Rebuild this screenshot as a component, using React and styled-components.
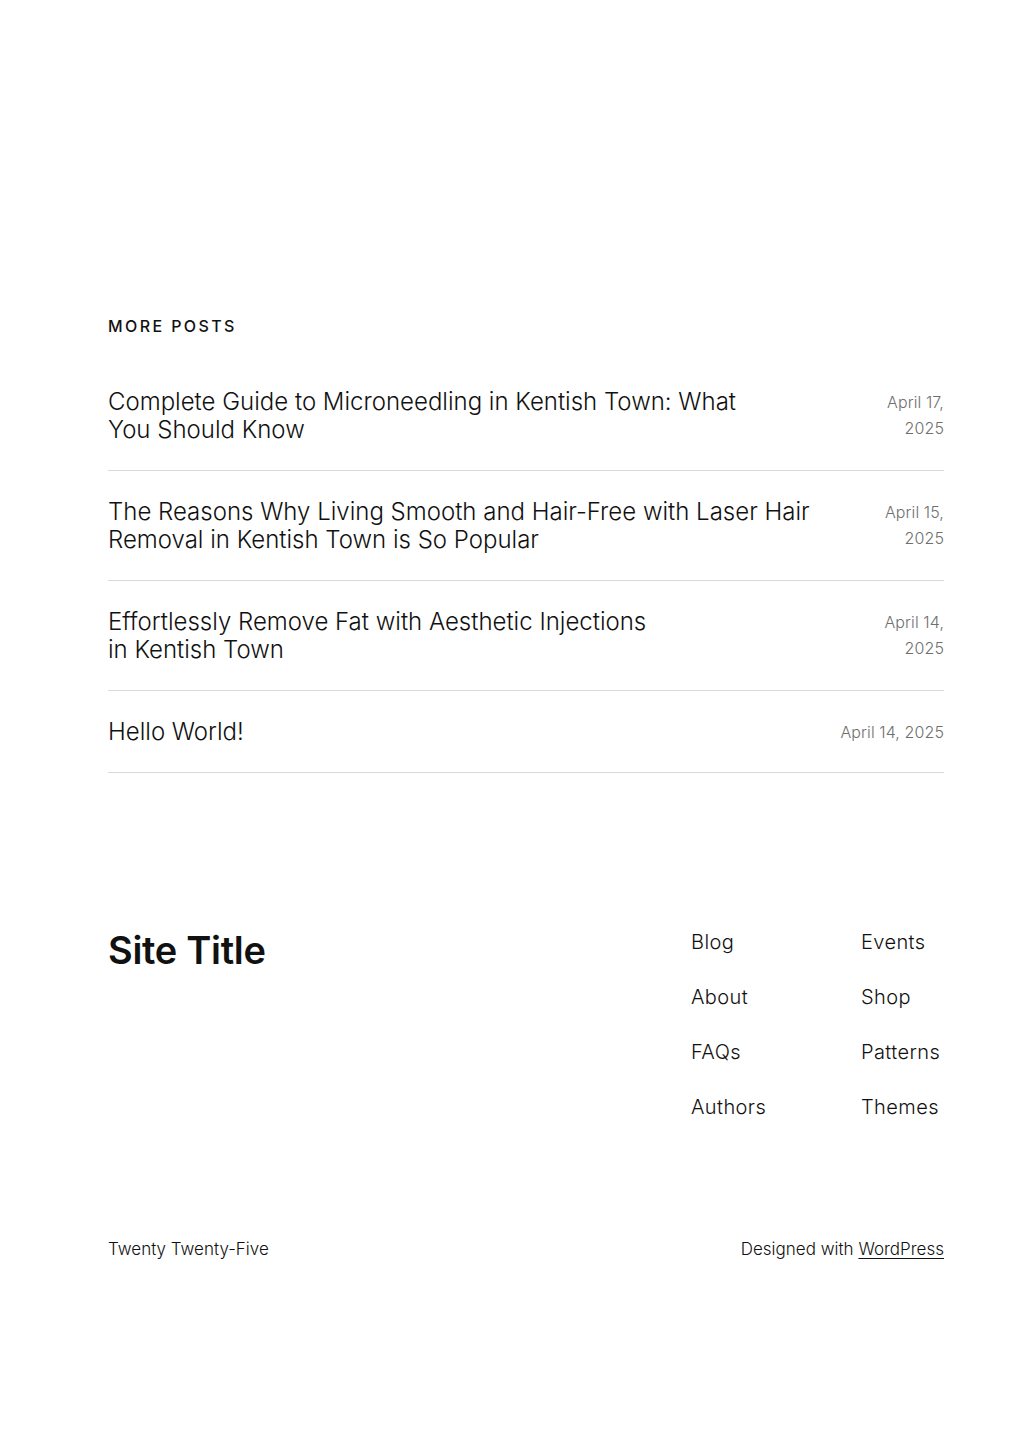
import styled, { createGlobalStyle } from 'styled-components';

const GlobalStyle = createGlobalStyle`
  body {
    margin: 0;
    background: #ffffff;
    color: #111111;
    font-family: Inter, "Noto Sans", sans-serif;
    font-weight: 300;
  }
`;

// titles are kept as the lines they break into on the page
const posts = [
  {
    id: 1,
    lines: ['Complete Guide to Microneedling in Kentish Town: What', 'You Should Know'],
    date: 'April 17, 2025',
    stacked: true,
  },
  {
    id: 2,
    lines: [
      'The Reasons Why Living Smooth and Hair-Free with Laser Hair',
      'Removal in Kentish Town is So Popular',
    ],
    date: 'April 15, 2025',
    stacked: true,
  },
  {
    id: 3,
    lines: ['Effortlessly Remove Fat with Aesthetic Injections', 'in Kentish Town'],
    date: 'April 14, 2025',
    stacked: true,
  },
  { id: 4, lines: ['Hello World!'], date: 'April 14, 2025', stacked: false },
];

const navLeft = ['Blog', 'About', 'FAQs', 'Authors'];
const navRight = ['Events', 'Shop', 'Patterns', 'Themes'];

export default function App() {
  return (
    <Page>
      <GlobalStyle />
      <MorePosts>
        <SectionHeading>More posts</SectionHeading>
        <PostList>
          {posts.map((post) => (
            <PostRow key={post.id}>
              <PostTitle href="#">
                {post.lines.map((line, i) => (
                  <TitleLine key={i}>{line}</TitleLine>
                ))}
              </PostTitle>
              <PostDate $stacked={post.stacked}>{post.date}</PostDate>
            </PostRow>
          ))}
        </PostList>
      </MorePosts>

      <Footer>
        <FooterTop>
          <SiteTitle href="#">Site Title</SiteTitle>
          <FooterNav>
            <NavColumn>
              {navLeft.map((item) => (
                <NavLink key={item} href="#">
                  {item}
                </NavLink>
              ))}
            </NavColumn>
            <NavColumn>
              {navRight.map((item) => (
                <NavLink key={item} href="#">
                  {item}
                </NavLink>
              ))}
            </NavColumn>
          </FooterNav>
        </FooterTop>
        <FooterBottom>
          <FooterText>Twenty Twenty-Five</FooterText>
          <FooterText>
            Designed with <FooterLink href="#">WordPress</FooterLink>
          </FooterText>
        </FooterBottom>
      </Footer>
    </Page>
  );
}

//------------Styled Comp------------
const Page = styled.div`
  min-height: 1449px;
  padding: 316px 80px 0 108px;
  box-sizing: border-box;
  width: 1024px;
`;

const MorePosts = styled.section`
  width: 836px;
`;

const SectionHeading = styled.h2`
  margin: 0 0 25px;
  font-size: 16px;
  line-height: 20px;
  font-weight: 500;
  letter-spacing: 2.4px;
  text-transform: uppercase;
`;

const PostList = styled.ul`
  list-style: none;
  margin: 0;
  padding: 0;
`;

const PostRow = styled.li`
  display: flex;
  justify-content: space-between;
  align-items: flex-start;
  gap: 24px;
  padding: 27px 0 26px;
  border-bottom: 1px solid #d9d9d9;
`;

const PostTitle = styled.a`
  display: flex;
  flex-direction: column;
  color: #111111;
  text-decoration: none;
  font-size: 24px;
  line-height: 28px;
  letter-spacing: 0;
  font-weight: 300;
`;

const TitleLine = styled.span`
  white-space: nowrap;
`;

const PostDate = styled.time`
  max-width: ${(props) => (props.$stacked ? '64px' : 'none')};
  text-align: right;
  color: #6f6f6f;
  font-size: 16px;
  line-height: 26px;
  letter-spacing: 0.1px;
  margin-top: 1px;
`;

const Footer = styled.footer`
  width: 836px;
  padding-top: 151px;
`;

const FooterTop = styled.div`
  display: flex;
  justify-content: space-between;
  align-items: flex-start;
`;

const SiteTitle = styled.a`
  color: #111111;
  text-decoration: none;
  font-size: 38px;
  line-height: 52px;
  font-weight: 600;
  letter-spacing: -0.3px;
`;

const FooterNav = styled.nav`
  display: grid;
  grid-template-columns: 170px 83px;
  padding-top: 4px;
`;

const NavColumn = styled.div`
  display: flex;
  flex-direction: column;
  gap: 27px;
`;

const NavLink = styled.a`
  color: #111111;
  text-decoration: none;
  font-size: 20px;
  line-height: 28px;
  letter-spacing: 0.4px;
`;

const FooterBottom = styled.div`
  display: flex;
  justify-content: space-between;
  align-items: center;
  margin-top: 116px;
`;

const FooterText = styled.p`
  margin: 0;
  font-size: 17px;
  line-height: 24px;
  letter-spacing: 0;
`;

const FooterLink = styled.a`
  color: #111111;
  text-decoration: underline;
  text-underline-offset: 3px;
`;
